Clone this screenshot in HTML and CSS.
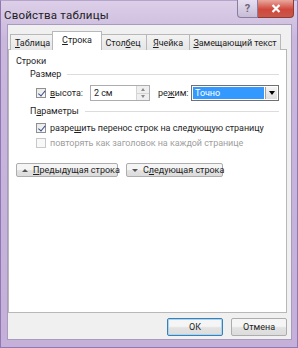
FILE: index.html
```html
<!DOCTYPE html>
<html lang="ru">
<head>
    <meta charset="UTF-8">
    <title>Свойства таблицы</title>
    <link rel="stylesheet" href="styles.css">
</head>
<body>
    <div class="window">
        <div class="titlebar">
            <span class="title">Свойства таблицы</span>
            <div class="caption-btns">
                <span class="cap-help">?</span>
                <span class="cap-close">
                    <svg width="10" height="9" viewBox="0 0 10 9">
                        <path d="M1.5 1 L8.5 8 M8.5 1 L1.5 8" stroke="#fff" stroke-width="2.2"/>
                    </svg>
                </span>
            </div>
        </div>

        <div class="client">
            <div class="tabs">
                <div class="tab t1"><span><u>Т</u>аблица</span></div>
                <div class="tab t2 active"><span><u>С</u>трока</span></div>
                <div class="tab t3"><span>Стол<u>б</u>ец</span></div>
                <div class="tab t4"><span><u>Я</u>чейка</span></div>
                <div class="tab t5"><span><u>З</u>амещающий текст</span></div>
            </div>

            <div class="panel">
                <div class="section-title">Строки</div>

                <div class="group-title"><span>Размер</span></div>
                <div class="size-row">
                    <span class="checkbox checked"></span>
                    <span class="label height-label"><u>в</u>ысота:</span>
                    <div class="spin">
                        <span class="spin-value">2 см</span>
                        <span class="spin-btns">
                            <span class="spin-up"></span>
                            <span class="spin-down"></span>
                        </span>
                    </div>
                    <span class="label mode-label">ре<u>ж</u>им:</span>
                    <div class="select">
                        <span class="select-value">Точно</span>
                        <span class="select-btn"></span>
                    </div>
                </div>

                <div class="group-title params"><span>П<u>а</u>раметры</span></div>
                <div class="check-row">
                    <span class="checkbox checked"></span>
                    <span>разре<u>ш</u>ить перенос строк на следующую страницу</span>
                </div>
                <div class="check-row disabled">
                    <span class="checkbox"></span>
                    <span>повторять как заголовок на каждой странице</span>
                </div>

                <div class="nav-row">
                    <button class="btn nav-btn prev"><span class="tri-up"></span><span><u>П</u>редыдущая строка</span></button>
                    <button class="btn nav-btn next"><span class="tri-down"></span><span>С<u>л</u>едующая строка</span></button>
                </div>
            </div>

            <div class="footer">
                <button class="btn default">ОК</button>
                <button class="btn">Отмена</button>
            </div>
        </div>
    </div>
</body>
</html>
```

FILE: styles.css
```css
:root {
    --frame-dark: #8f78b3;
    --face: #f0f0f0;
    --edge: #adadad;
    --text: #1e1e1e;
}

body {
    margin: 0;
    font-family: Roboto, "Noto Sans", sans-serif;
    font-size: 9px;
    letter-spacing: -0.05px;
    color: var(--text);
}

u {
    text-decoration-thickness: 1px;
    text-underline-offset: 1px;
}

.window {
    width: 298px;
    height: 348px;
    box-sizing: border-box;
    display: flex;
    flex-direction: column;
    padding: 0 5px 7px 6px;
    background: linear-gradient(#dccfe8, #c9b7dc 40px, #c4b0d8);
    border: 1px solid var(--frame-dark);
    border-top-color: #b6a3cc;
}

.titlebar {
    height: 23px;
    display: flex;
    justify-content: space-between;
    align-items: flex-start;
}

.title {
    margin: 7px 0 0 -3px;
    font-size: 11.5px;
    letter-spacing: 0.2px;
    color: #222;
}

.caption-btns {
    display: flex;
    margin-right: -2px;
    margin-top: -1px;
}

.cap-help,
.cap-close {
    height: 18px;
    display: flex;
    align-items: center;
    justify-content: center;
    box-sizing: border-box;
    border: 1px solid #8a7ba0;
    border-top: none;
}

.cap-help {
    width: 21px;
    border-radius: 0 0 0 4px;
    background: linear-gradient(#e6dff0, #c7bcd6);
    color: #6e6580;
    font-weight: bold;
    font-size: 11px;
}

.cap-close {
    width: 36px;
    border-left: none;
    border-color: #8e3b36;
    border-radius: 0 0 4px 0;
    background: linear-gradient(#e9a89e, #d0483c 55%, #c8584b);
}

.client {
    flex: 1;
    display: flex;
    flex-direction: column;
    background: var(--face);
    border: 1px solid #a99abf;
    padding: 7px 4px 0 0;
}

.tabs {
    display: flex;
    align-items: flex-end;
    margin-left: 3px;
    height: 18px;
    position: relative;
    z-index: 1;
    margin-bottom: -1px;
}

.tab {
    flex: none;
    height: 16px;
    box-sizing: border-box;
    display: flex;
    align-items: center;
    justify-content: center;
    border: 1px solid #b8b8b8;
    border-bottom: none;
    margin-left: -1px;
    background: linear-gradient(#f3f3f3, #e6e6e6);
    white-space: nowrap;
}

.t1 { width: 45px; }
.t2 { width: 47px; }
.t3 { width: 48px; }
.t4 { width: 44px; }
.t5 { width: 92px; }

.tab.active {
    width: 50px;
    height: 19px;
    background: #fff;
    padding-bottom: 2px;
    margin: 0 -2px 0 -3px;
    position: relative;
    z-index: 2;
}

.panel {
    flex: 1;
    background: #fff;
    border: 1px solid #b8b8b8;
    padding: 5px 7px 0 7px;
}

.section-title {
    height: 13px;
    line-height: 13px;
}

.group-title {
    display: flex;
    align-items: center;
    gap: 6px;
    margin: 0 0 0 14px;
    height: 13px;
    line-height: 13px;
}

.group-title::after {
    content: "";
    flex: 1;
    border-top: 1px solid #dcdcdc;
}

.size-row {
    display: flex;
    align-items: center;
    height: 16px;
    margin: 4px 0 0 20px;
    white-space: nowrap;
}

.checkbox {
    width: 10px;
    height: 10px;
    box-sizing: border-box;
    border: 1px solid #8f8f8f;
    background: linear-gradient(135deg, #e8e8e8, #fafafa);
    flex: none;
    position: relative;
}

.checkbox.checked::after {
    content: "";
    position: absolute;
    left: 2.5px;
    top: 0;
    width: 2.5px;
    height: 5.5px;
    border: solid #3a4f8c;
    border-width: 0 1.5px 1.5px 0;
    transform: rotate(40deg);
}

.label {
    margin-left: 4px;
}

.height-label {
    width: 35px;
}

.spin {
    margin-left: 5px;
    width: 60px;
    height: 16px;
    box-sizing: border-box;
    border: 1px solid #abadb3;
    display: flex;
    background: #fff;
}

.spin-value {
    flex: 1;
    padding-left: 3px;
    line-height: 14px;
}

.spin-btns {
    width: 12px;
    display: flex;
    flex-direction: column;
    border-left: 1px solid #d4d4d4;
}

.spin-up,
.spin-down {
    flex: 1;
    background: #efefef;
    display: flex;
    align-items: center;
    justify-content: center;
}

.spin-up {
    border-bottom: 1px solid #d4d4d4;
}

.spin-up::before {
    content: "";
    border: 2.5px solid transparent;
    border-bottom: 3px solid #8a8a8a;
    border-top: none;
}

.spin-down::before {
    content: "";
    border: 2.5px solid transparent;
    border-top: 3px solid #8a8a8a;
    border-bottom: none;
}

.mode-label {
    margin-left: 8px;
}

.select {
    margin-left: auto;
    width: 88px;
    height: 16px;
    box-sizing: border-box;
    border: 1px solid #707070;
    display: flex;
    padding: 1px;
    gap: 1px;
    background: #fff;
}

.select-value {
    flex: 1;
    background: #3399ff;
    color: #fff;
    line-height: 12px;
    padding-left: 2px;
}

.select-btn {
    width: 11px;
    background: linear-gradient(#f4f4f4, #dedede);
    border-left: 1px solid #a0a0a0;
    display: flex;
    align-items: center;
    justify-content: center;
}

.select-btn::before {
    content: "";
    border: 3px solid transparent;
    border-top: 4px solid #000;
    border-bottom: none;
}

.params {
    margin-top: 4px;
}

.check-row {
    display: flex;
    align-items: center;
    gap: 4px;
    margin: 4px 0 0 20px;
    height: 12px;
    line-height: 12px;
    white-space: nowrap;
}

.check-row.disabled {
    color: #a0a0a0;
    margin-top: 3px;
}

.check-row.disabled .checkbox {
    border-color: #c8c8c8;
    background: #f8f8f8;
}

.nav-row {
    display: flex;
    gap: 8px;
    margin-top: 14px;
}

.btn {
    font-family: inherit;
    font-size: 9px;
    color: var(--text);
    height: 18px;
    padding: 0;
    box-sizing: border-box;
    border: 1px solid var(--edge);
    border-radius: 2px;
    background: linear-gradient(#f5f5f5 45%, #e2e2e2 55%, #dcdcdc);
    white-space: nowrap;
}

.nav-btn {
    height: 14px;
    display: flex;
    align-items: center;
    gap: 5px;
    padding: 0 0 0 5px;
}

.prev { width: 102px; }
.next { width: 97px; }

.tri-up::before,
.tri-down::before {
    content: "";
    display: block;
    border: 3px solid transparent;
}

.tri-up::before {
    border-bottom: 3px solid #555;
    border-top: none;
}

.tri-down::before {
    border-top: 3px solid #555;
    border-bottom: none;
}

.footer {
    display: flex;
    justify-content: flex-end;
    gap: 8px;
    padding: 5px 0 3px;
}

.footer .btn {
    width: 56px;
}

.footer .btn.default {
    border-color: #3c7fb1;
    box-shadow: inset 0 0 0 1px #a8d5f5;
}
```
